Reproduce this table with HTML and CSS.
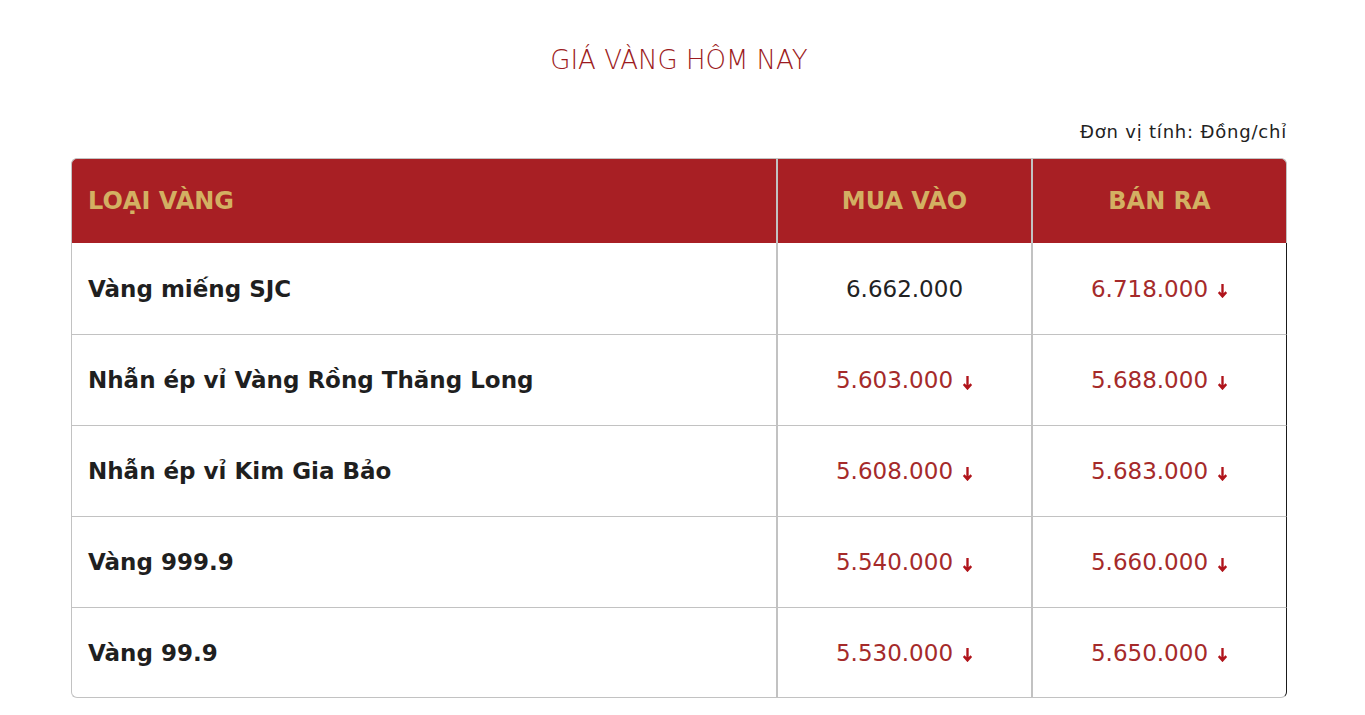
FILE: index.html
```html
<!DOCTYPE html>
<html lang="vi">
<head>
<meta charset="utf-8">
<title>Giá vàng hôm nay</title>
<link rel="stylesheet" href="styles.css">
</head>
<body>
<main class="wrap">
  <h1 class="title">GIÁ VÀNG HÔM NAY</h1>
  <p class="unit">Đơn vị tính: Đồng/chỉ</p>
  <table class="gold">
    <thead>
      <tr>
        <th class="c-name">LOẠI VÀNG</th>
        <th class="c-buy">MUA VÀO</th>
        <th class="c-sell">BÁN RA</th>
      </tr>
    </thead>
    <tbody>
      <tr>
        <td class="c-name">Vàng miếng SJC</td>
        <td class="c-buy"><span class="price">6.662.000</span></td>
        <td class="c-sell"><span class="price down">6.718.000<svg class="arrow" viewBox="0 0 10 14"><path d="M5 1v11M1.5 8.5 5 12.5 8.5 8.5"/></svg></span></td>
      </tr>
      <tr>
        <td class="c-name">Nhẫn ép vỉ Vàng Rồng Thăng Long</td>
        <td class="c-buy"><span class="price down">5.603.000<svg class="arrow" viewBox="0 0 10 14"><path d="M5 1v11M1.5 8.5 5 12.5 8.5 8.5"/></svg></span></td>
        <td class="c-sell"><span class="price down">5.688.000<svg class="arrow" viewBox="0 0 10 14"><path d="M5 1v11M1.5 8.5 5 12.5 8.5 8.5"/></svg></span></td>
      </tr>
      <tr>
        <td class="c-name">Nhẫn ép vỉ Kim Gia Bảo</td>
        <td class="c-buy"><span class="price down">5.608.000<svg class="arrow" viewBox="0 0 10 14"><path d="M5 1v11M1.5 8.5 5 12.5 8.5 8.5"/></svg></span></td>
        <td class="c-sell"><span class="price down">5.683.000<svg class="arrow" viewBox="0 0 10 14"><path d="M5 1v11M1.5 8.5 5 12.5 8.5 8.5"/></svg></span></td>
      </tr>
      <tr>
        <td class="c-name">Vàng 999.9</td>
        <td class="c-buy"><span class="price down">5.540.000<svg class="arrow" viewBox="0 0 10 14"><path d="M5 1v11M1.5 8.5 5 12.5 8.5 8.5"/></svg></span></td>
        <td class="c-sell"><span class="price down">5.660.000<svg class="arrow" viewBox="0 0 10 14"><path d="M5 1v11M1.5 8.5 5 12.5 8.5 8.5"/></svg></span></td>
      </tr>
      <tr>
        <td class="c-name">Vàng 99.9</td>
        <td class="c-buy"><span class="price down">5.530.000<svg class="arrow" viewBox="0 0 10 14"><path d="M5 1v11M1.5 8.5 5 12.5 8.5 8.5"/></svg></span></td>
        <td class="c-sell"><span class="price down">5.650.000<svg class="arrow" viewBox="0 0 10 14"><path d="M5 1v11M1.5 8.5 5 12.5 8.5 8.5"/></svg></span></td>
      </tr>
    </tbody>
  </table>
</main>
</body>
</html>
```
FILE: styles.css
```css
html, body {
  margin: 0;
  padding: 0;
  background: #ffffff;
}

body {
  font-family: "DejaVu Sans", "Noto Sans", sans-serif;
  color: #222222;
}

.wrap {
  margin: 0 78px 0 71px;
  padding-top: 44px;
}

.title {
  margin: 0;
  text-align: center;
  font-family: "DejaVu Sans", sans-serif;
  font-weight: 200;
  font-size: 26px;
  line-height: 32px;
  color: #9c1a21;
}

.unit {
  margin: 45px 0 0;
  text-align: right;
  font-size: 18px;
  line-height: 22px;
  letter-spacing: 0.8px;
  color: #222222;
}

.gold {
  width: 100%;
  margin-top: 15px;
  border-collapse: separate;
  border-spacing: 0;
  table-layout: fixed;
}

.gold th,
.gold td {
  box-sizing: border-box;
}

.gold .c-name { width: 705px; }
.gold .c-buy { width: 255px; }

.gold th {
  height: 85px;
  padding: 0 16px;
  background: #a81f24;
  color: #d3b062;
  font-size: 24px;
  font-weight: 700;
  border-top: 1px solid #c2c2c2;
  vertical-align: middle;
}

.gold th.c-name {
  text-align: left;
  border-left: 1px solid #c2c2c2;
  border-top-left-radius: 6px;
}

.gold th.c-buy,
.gold th.c-sell {
  text-align: center;
  border-left: 2px solid #c2c2c2;
}

.gold th.c-sell {
  border-right: 1px solid #c2c2c2;
  border-top-right-radius: 6px;
}

.gold td {
  height: 91px;
  padding: 0 16px;
  border-top: 1px solid #c2c2c2;
  vertical-align: middle;
  font-size: 23px;
}

.gold tbody tr:first-child td {
  border-top: none;
}

.gold tbody tr:last-child td {
  border-bottom: 1px solid #c2c2c2;
}

.gold td.c-name {
  border-left: 1px solid #c2c2c2;
  font-weight: 700;
  color: #1f1f1f;
}

.gold tbody tr:last-child td.c-name {
  border-bottom-left-radius: 6px;
}

.gold td.c-buy,
.gold td.c-sell {
  text-align: center;
  border-left: 2px solid #c2c2c2;
}

.gold td.c-sell {
  border-right: 1px solid #1a1a1a;
}

.gold tbody tr:last-child td.c-sell {
  border-bottom-right-radius: 6px;
}

.price {
  display: inline-flex;
  align-items: center;
  color: #222222;
}

.price.down {
  color: #a52a2a;
}

.arrow {
  width: 11px;
  height: 15px;
  margin-left: 9px;
  margin-top: 4px;
  fill: none;
  stroke: #b0141b;
  stroke-width: 2.2;
}
```
